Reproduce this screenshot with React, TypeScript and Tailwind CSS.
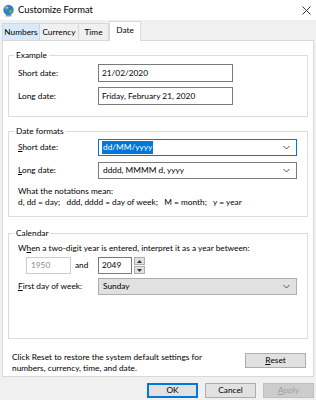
import React from "react";

/* ------------------------------------------------------------------ */
/*  Small pieces                                                       */
/* ------------------------------------------------------------------ */

function GlobeIcon() {
  return (
    <svg width="13" height="13" viewBox="0 0 13 13">
      <circle cx="6.5" cy="6" r="5.2" fill="#2f7fd0" />
      <path d="M3 3.2 L5.6 2.4 L6.4 4.4 L5 6 L3.4 5.4 Z" fill="#67b346" />
      <path d="M6.8 6.4 L9.6 5.6 L10.6 7.6 L8.6 9.8 L7.2 8.6 Z" fill="#67b346" />
      <ellipse cx="4.6" cy="3.6" rx="2" ry="1" fill="#ffffff" opacity="0.35" />
      <rect x="3.5" y="11" width="6" height="1.6" rx="0.5" fill="#9a9a9a" />
    </svg>
  );
}

function Chevron() {
  return (
    <svg width="7" height="5" viewBox="0 0 7 5" className="shrink-0">
      <path d="M0.5 1 L3.5 4 L6.5 1" fill="none" stroke="#505050" strokeWidth="1" />
    </svg>
  );
}

function Group({
  title,
  className,
  children,
}: {
  title: string;
  className: string;
  children: React.ReactNode;
}) {
  return (
    <div className={`relative border border-[#dcdcdc] ${className}`}>
      <span className="absolute -top-[7px] left-[5px] bg-white px-[2px] leading-[12px]">{title}</span>
      {children}
    </div>
  );
}

function Button({
  children,
  variant = "normal",
  className = "",
}: {
  children: React.ReactNode;
  variant?: "normal" | "default" | "disabled";
  className?: string;
}) {
  const styles = {
    normal: "border-[#adadad] bg-[#e1e1e1] text-black",
    default: "border-[#0078d7] bg-[#e1e1e1] text-black shadow-[inset_0_0_0_1px_#0078d7]",
    disabled: "border-[#bfbfbf] bg-[#cccccc] text-[#a0a0a0]",
  };
  return (
    <div
      className={`flex h-[15px] items-center justify-center border leading-none ${styles[variant]} ${className}`}
    >
      {children}
    </div>
  );
}

/* ------------------------------------------------------------------ */
/*  Page                                                               */
/* ------------------------------------------------------------------ */

export default function App() {
  return (
    <div className="flex h-[400px] w-[316px] flex-col overflow-hidden bg-[#f0f0f0] font-['Lato','Liberation_Sans',sans-serif] text-[8.3px] text-black">
      {/* Title bar */}
      <div className="flex h-[20px] items-center bg-white pl-[2px] pr-[5px]">
        <GlobeIcon />
        <span className="ml-[3px] text-[9.4px]">Customize Format</span>
        <svg width="9" height="9" viewBox="0 0 9 9" className="ml-auto">
          <path d="M0.5 0.5 L8.5 8.5 M8.5 0.5 L0.5 8.5" stroke="#222" strokeWidth="0.9" />
        </svg>
      </div>

      {/* Tabs */}
      <div className="relative z-10 -mb-px flex h-[21px] items-end px-[2px]">
        <div className="mb-px flex h-[17px] w-[38px] items-center justify-center border border-b-0 border-[#c0dcf3] bg-[#d8eaf9]">
          Numbers
        </div>
        <div className="mb-px flex h-[17px] w-[39px] items-center justify-center border border-b-0 border-l-0 border-[#d9d9d9]">
          Currency
        </div>
        <div className="mb-px flex h-[17px] w-[30px] items-center justify-center border border-b-0 border-l-0 border-[#d9d9d9]">
          Time
        </div>
        <div className="flex h-[20px] w-[32px] items-center justify-center border border-b-0 border-[#d9d9d9] bg-white pb-[2px]">
          Date
        </div>
      </div>

      {/* Tab page */}
      <div className="ml-[2px] flex h-[337px] w-[312px] flex-col border border-[#d9d9d9] bg-white px-[5px] pt-[14px]">
        <Group title="Example" className="pb-[11px] pl-[9px] pt-[8px]">
          <div className="grid grid-cols-[80px_135px] items-center gap-y-[5px]">
            <span>Short date:</span>
            <div className="flex h-[18px] items-center border border-[#7a7a7a] px-[3px]">21/02/2020</div>
            <span>Long date:</span>
            <div className="flex h-[18px] items-center border border-[#7a7a7a] px-[3px]">Friday, February 21, 2020</div>
          </div>
        </Group>

        <Group title="Date formats" className="mt-[14px] pb-[8px] pl-[9px] pt-[7px]">
          <div className="grid grid-cols-[80px_199px] items-center gap-y-[6px]">
            <span>
              <span className="underline">S</span>hort date:
            </span>
            <div className="flex h-[17px] items-center border border-[#0078d7] pl-[3px] pr-[6px]">
              <span className="bg-[#0078d7] px-px leading-[13px] text-white">dd/MM/yyyy</span>
              <span className="ml-auto">
                <Chevron />
              </span>
            </div>
            <span>
              <span className="underline">L</span>ong date:
            </span>
            <div className="flex h-[17px] items-center border border-[#7a7a7a] pl-[4px] pr-[6px]">
              <span>dddd, MMMM d, yyyy</span>
              <span className="ml-auto">
                <Chevron />
              </span>
            </div>
          </div>
          <div className="mt-[7px] leading-[11px]">
            <div>What the notations mean:</div>
            <div className="whitespace-pre">d, dd = day;   ddd, dddd = day of week;   M = month;   y = year</div>
          </div>
        </Group>

        <Group title="Calendar" className="mt-[16px] h-[106px] pl-[9px] pt-[9px]">
          <div className="leading-[11px]">
            W<span className="underline">h</span>en a two-digit year is entered, interpret it as a year between:
          </div>
          <div className="mt-[3px] flex items-center">
            <div className="ml-[8px] flex h-[17px] w-[45px] items-center border border-[#cccccc] px-[4px] text-[#8a8a8a]">
              1950
            </div>
            <span className="ml-[4px] w-[23px]">and</span>
            <div className="flex h-[17px] w-[34px] items-center border border-[#7a7a7a] px-[3px]">2049</div>
            <div className="ml-[2px] flex h-[17px] w-[11px] flex-col gap-px">
              <div className="flex flex-1 items-center justify-center border border-[#adadad] bg-[#e1e1e1]">
                <svg width="5" height="3" viewBox="0 0 5 3">
                  <path d="M0 3 L2.5 0 L5 3 Z" fill="#333" />
                </svg>
              </div>
              <div className="flex flex-1 items-center justify-center border border-[#adadad] bg-[#e1e1e1]">
                <svg width="5" height="3" viewBox="0 0 5 3">
                  <path d="M0 0 L2.5 3 L5 0 Z" fill="#333" />
                </svg>
              </div>
            </div>
          </div>
          <div className="mt-[4px] grid grid-cols-[80px_199px] items-center">
            <span>
              <span className="underline">F</span>irst day of week:
            </span>
            <div className="flex h-[17px] items-center border border-[#adadad] bg-[#e1e1e1] pl-[4px] pr-[6px]">
              <span>Sunday</span>
              <span className="ml-auto">
                <Chevron />
              </span>
            </div>
          </div>
        </Group>

        <div className="mt-[13px] flex items-start justify-between pl-[4px] pr-[2px]">
          <div className="leading-[11px]">
            <div>Click Reset to restore the system default settings for</div>
            <div>numbers, currency, time, and date.</div>
          </div>
          <Button className="mt-[1px] w-[61px]">
            <span className="underline">R</span>eset
          </Button>
        </div>
      </div>

      {/* Bottom buttons */}
      <div className="flex justify-end gap-[7px] pr-[2px] pt-[6px]">
        <Button variant="default" className="w-[51px]">
          OK
        </Button>
        <Button className="w-[51px]">Cancel</Button>
        <Button variant="disabled" className="w-[51px]">
          <span className="underline">A</span>pply
        </Button>
      </div>
    </div>
  );
}
